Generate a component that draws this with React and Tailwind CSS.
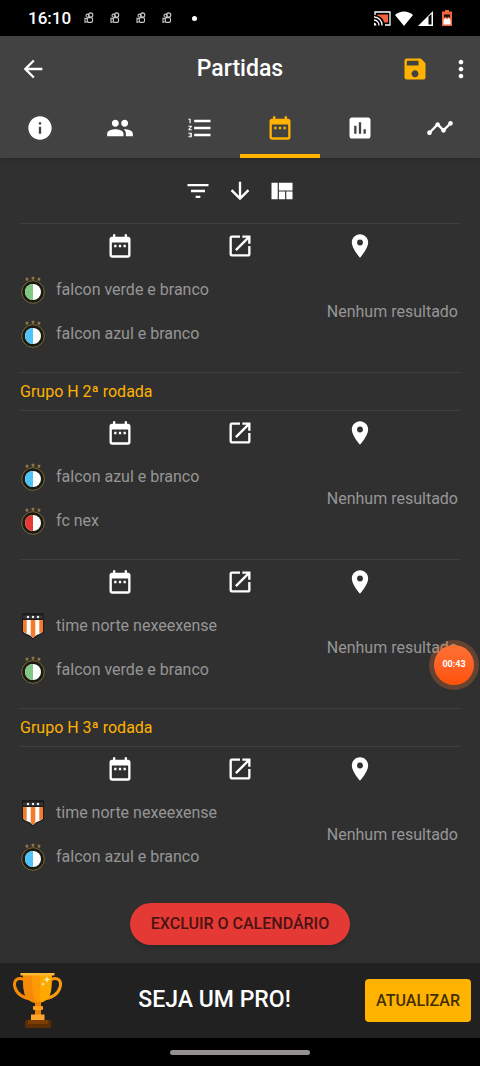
import {
  MdArrowBack,
  MdArrowDownward,
  MdAssessment,
  MdDateRange,
  MdFilterList,
  MdFormatListNumbered,
  MdInfo,
  MdLaunch,
  MdLocationOn,
  MdMoreVert,
  MdPeople,
  MdSave,
  MdTimeline,
  MdViewQuilt,
} from "react-icons/md";

const rounds = [
  {
    title: null,
    matches: [
      [
        { name: "falcon verde e branco", color: "#81c784" },
        { name: "falcon azul e branco", color: "#4fc3f7" },
      ],
    ],
  },
  {
    title: "Grupo H 2ª rodada",
    matches: [
      [
        { name: "falcon azul e branco", color: "#4fc3f7" },
        { name: "fc nex", color: "#e53935" },
      ],
      [
        { name: "time norte nexeexense", shield: true },
        { name: "falcon verde e branco", color: "#81c784" },
      ],
    ],
  },
  {
    title: "Grupo H 3ª rodada",
    matches: [
      [
        { name: "time norte nexeexense", shield: true },
        { name: "falcon azul e branco", color: "#4fc3f7" },
      ],
    ],
  },
];

const tabs = [
  { label: "Informações", Icon: MdInfo },
  { label: "Equipes", Icon: MdPeople },
  { label: "Classificação", Icon: MdFormatListNumbered },
  { label: "Partidas", Icon: MdDateRange, active: true },
  { label: "Estatísticas", Icon: MdAssessment },
  { label: "Evolução", Icon: MdTimeline },
];

const KwaiIcon = () => (
  <svg width="10" height="12" viewBox="0 0 10 12" fill="none" stroke="#c8c8c8" strokeWidth="1.1">
    <circle cx="3.600" cy="3.700" r="1.600" />
    <circle cx="6.700" cy="3" r="2.100" />
    <rect x="3.300" y="5.600" width="5.200" height="4.800" rx="1.300" />
    <path d="M3.300 7 1 6.300v4l2.300-.6" />
  </svg>
);

const StatusBar = () => (
  <div className="flex h-9 items-center justify-between bg-black px-7 text-white">
    <div className="flex items-center">
      <span className="w-14 pt-px text-[17px] font-medium">16:10</span>
      <div className="flex items-center gap-4">
        <KwaiIcon />
        <KwaiIcon />
        <KwaiIcon />
        <KwaiIcon />
        <span className="ml-1 size-[5px] rounded-full bg-white" />
      </div>
    </div>
    <div className="flex items-center gap-1">
      <svg width="17" height="15" viewBox="0 0 17 15" fill="none">
        <path d="M3.500 3.500h10.500v8H10C9.500 8 7 5.500 3.500 5z" fill="#f4623f" />
        <path d="M1 4V1h15v13h-5" stroke="#fff" strokeWidth="1.300" />
        <path d="M0 6a8 8 0 0 1 8 8.500M0 9a5.500 5.500 0 0 1 5 5.500" stroke="#fff" strokeWidth="1.300" />
        <path d="M0 11.500a3 3 0 0 1 2.500 3H0z" fill="#fff" />
      </svg>
      <svg width="18" height="15" viewBox="0 0 18 15" fill="#fff">
        <path d="M0 4C5-.8 13-.8 18 4L9 15z" />
      </svg>
      <svg width="17" height="15" viewBox="0 0 17 15">
        <path d="M1 15 16 0v15z" fill="#fff" />
        <path d="M11.500 5.500 14.500 3v10.500h-3z" fill="#000" />
      </svg>
      <svg className="ml-1" width="10" height="16" viewBox="0 0 10 16">
        <path d="M3 0h4v1.500h3V16H0V1.500h3z" fill="#f4623f" />
        <path d="M2 8V4.500h6V8L6.500 6.500 5 8 3.500 6.500z" fill="#111" />
        <path d="M1.500 9.500 3.500 8 5 9.500 6.500 8l2 1.500v5h-7z" fill="#fff" />
      </svg>
    </div>
  </div>
);

const Badge = ({ color, shield }) =>
  shield ? (
    <svg width="26" height="28" viewBox="0 0 26 28">
      <path d="M2 1h22v18.500c-1 3.500-8 4-11 8-3-4-10-4.500-11-8z" fill="#1c1c1c" />
      <path d="M3 8h20v11c-1 3-7 3-10 7-3-4-9-4-10-7z" fill="#fff" />
      <path d="M3 8h3.700v13.500C5 20.800 3.500 20 3 19zM10.700 8h4.600v15.500L13 26l-2.300-2.500zM19.300 8H23v11c-.5 1-2 1.800-3.700 2.500z" fill="#f47b2a" />
      <path d="M3 3.500h20v3H3z" fill="#353535" />
      <g fill="#eee">
        <circle cx="8" cy="5" r="1.200" />
        <circle cx="13" cy="5" r="1.200" />
        <circle cx="18" cy="5" r="1.200" />
      </g>
    </svg>
  ) : (
    <svg width="26" height="28" viewBox="0 0 26 28">
      <circle cx="13" cy="16" r="11.300" fill="#1b1b16" stroke="#7a6834" strokeWidth="1" />
      <circle cx="13" cy="16" r="8" fill="#fff" />
      <path d="M13 8a8 8 0 0 0 0 16z" fill={color} />
      <g fill="#9a7b42">
        <path d="m7 1 .6 1.300 1.400.2-1 1 .2 1.500L7 4.300 5.800 5 6 3.500l-1-1 1.400-.2z" />
        <path d="m13 0 .6 1.300 1.400.2-1 1 .2 1.500-1.200-.7-1.200.7.200-1.500-1-1 1.400-.2z" />
        <path d="m19 1 .6 1.300 1.400.2-1 1 .2 1.500-1.200-.7-1.200.7.200-1.500-1-1 1.400-.2z" />
      </g>
    </svg>
  );

const Trophy = () => (
  <svg width="52" height="58" viewBox="0 0 52 58">
    <path d="M12 7.500C5 4.500 1 9 3 15.500c2 6.500 8 10.500 17 11.500" fill="none" stroke="#f58a07" strokeWidth="3" />
    <path d="M39 7.500c7-3 11 1.500 9 8-2 6.500-8 10.500-17 11.500" fill="none" stroke="#f99a0c" strokeWidth="3" />
    <path d="M11 2h29c0 15-1 22-5 25.500-3 2.500-6 3.500-9.500 3.500S19 30 16 27.500C12 24 11 17 11 2z" fill="#ffa800" />
    <path d="M11 2h9c0 14 1 24 5.500 29C22 31 19 30 16 27.500 12 24 11 17 11 2z" fill="#f58a07" />
    <path d="M20 2h8v29h-2.500C21 26 20 16 20 2z" fill="#fb9a04" />
    <path d="M8.500 1h34v2.500h-34z" fill="#ffb836" />
    <path d="M23 30h6v14h-6z" fill="#ee8208" />
    <rect x="21" y="34" width="10" height="4" rx="1" fill="#ff9f1c" />
    <path d="M19 42.500h13.500V48H19z" fill="#ffa42a" />
    <rect x="13" y="48" width="26" height="8" rx="2.500" fill="#5e2e03" />
    <path d="M16 48h20v4H16z" fill="#7c3d00" />
    <path d="m35 4 1 2.500 2.500 1L36 8.500 35 11l-1-2.500-2.500-1 2.500-1zM31 10l.7 1.500 1.500.5-1.500.7L31 14l-.7-1.300L29 12l1.300-.5z" fill="#ffe9a8" />
  </svg>
);

const Match = ({ teams }) => (
  <article className="h-[149px] border-t border-[#404040]">
    <div className="grid grid-cols-3 justify-items-center px-10 pt-2 text-[28px] text-white">
      <button aria-label="Data">
        <MdDateRange />
      </button>
      <button aria-label="Abrir">
        <MdLaunch />
      </button>
      <button aria-label="Local">
        <MdLocationOn />
      </button>
    </div>
    <div className="flex items-center justify-between pt-2 text-base text-[#969696]">
      <ul>
        {teams.map((team) => (
          <li key={team.name} className="flex h-11 items-center gap-2.5">
            <Badge color={team.color} shield={team.shield} />
            <span>{team.name}</span>
          </li>
        ))}
      </ul>
      <p className="pr-0.5">Nenhum resultado</p>
    </div>
  </article>
);

const App = () => {
  return (
    <div className="flex min-h-screen w-full flex-col bg-[#303030] font-['Roboto',sans-serif]">
      <StatusBar />
      <header className="bg-[#424242] text-white shadow-md">
        <div className="grid h-[66px] grid-cols-[1fr_auto_1fr] items-center px-[5px] text-[28px]">
          <button aria-label="Voltar" className="ml-3.5 justify-self-start">
            <MdArrowBack />
          </button>
          <h1 className="text-[23px] font-medium">Partidas</h1>
          <div className="flex gap-[18px] justify-self-end">
            <button aria-label="Salvar" className="text-[#ffb300]">
              <MdSave />
            </button>
            <button aria-label="Mais opções">
              <MdMoreVert />
            </button>
          </div>
        </div>
        <nav className="grid h-14 grid-cols-6 text-[28px]">
          {tabs.map(({ label, Icon, active }) => (
            <button
              key={label}
              aria-label={label}
              className={
                active
                  ? "flex justify-center border-b-4 border-[#ffb300] pt-3 text-[#ffb300]"
                  : "flex justify-center pt-3"
              }
            >
              <Icon />
            </button>
          ))}
        </nav>
      </header>

      <main className="flex-1 px-5">
        <div className="flex h-[65px] items-center justify-center gap-[14px] text-[28px] text-white">
          <button aria-label="Filtrar">
            <MdFilterList />
          </button>
          <button aria-label="Ordenar">
            <MdArrowDownward />
          </button>
          <button aria-label="Visualização">
            <MdViewQuilt />
          </button>
        </div>
        {rounds.map((round, i) => (
          <section key={i}>
            {round.title && (
              <h2 className="flex h-[38px] items-center border-t border-[#404040] text-base text-[#ffb300]">
                {round.title}
              </h2>
            )}
            {round.matches.map((teams, j) => (
              <Match key={j} teams={teams} />
            ))}
          </section>
        ))}
        <div className="flex justify-center pt-2">
          <button className="h-[42px] rounded-full bg-[#e53935] px-[21px] text-base font-medium text-[#4a1412] shadow-md">
            EXCLUIR O CALENDÁRIO
          </button>
        </div>
      </main>

      <footer>
        <div className="flex h-[75px] items-center justify-between bg-[#212121] pr-[9px] pl-3">
          <Trophy />
          <p className="text-[23px] font-medium text-white">SEJA UM PRO!</p>
          <button className="h-[43px] rounded bg-[#ffb300] px-[11px] text-base font-medium text-[#422f00]">
            ATUALIZAR
          </button>
        </div>
        <div className="flex h-7 items-center justify-center bg-black">
          <span className="h-[5px] w-[140px] rounded-full bg-[#949094]" />
        </div>
      </footer>

      {/* screen recorder bubble */}
      <div className="fixed top-[640px] right-px flex size-[50px] items-center justify-center rounded-full bg-[#ff7a30]/25">
        <span className="flex size-10 items-center justify-center rounded-full bg-linear-to-b from-[#ff7034] to-[#ff5108] text-[9px] font-bold text-white">
          00:43
        </span>
      </div>
    </div>
  );
};

export default App;
